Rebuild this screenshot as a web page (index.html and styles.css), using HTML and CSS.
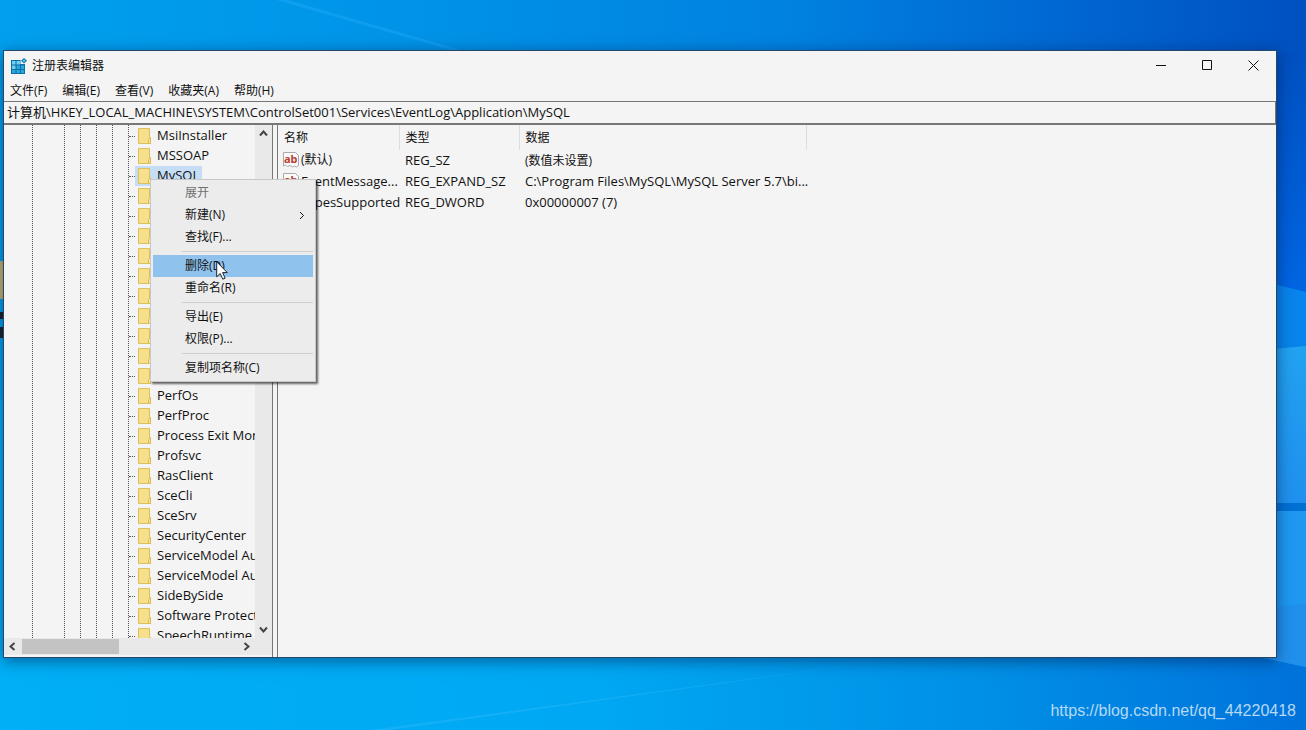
FILE: index.html
```html
<!DOCTYPE html>
<html lang="zh-CN">
<head>
<meta charset="utf-8">
<title>注册表编辑器</title>
<link rel="stylesheet" href="styles.css">
</head>
<body>
<div class="desktop">
  <svg class="wallpaper" viewBox="0 0 1306 730" preserveAspectRatio="none" aria-hidden="true">
    <defs>
      <linearGradient id="top" x1="0" y1="0" x2="1" y2="0">
        <stop offset="0" stop-color="#00a0ee"/><stop offset=".3" stop-color="#0094e8"/>
        <stop offset=".6" stop-color="#0082e0"/><stop offset=".8" stop-color="#0069d3"/><stop offset="1" stop-color="#0050c0"/>
      </linearGradient>
      <linearGradient id="bottom" x1="0" y1="0" x2="1" y2="0">
        <stop offset="0" stop-color="#00aff6"/><stop offset=".45" stop-color="#00a8f3"/>
        <stop offset=".75" stop-color="#0090e6"/><stop offset="1" stop-color="#0072db"/>
      </linearGradient>
      <linearGradient id="side" x1="0" y1="0" x2="0" y2="1">
        <stop offset="0" stop-color="#0050c0"/><stop offset="1" stop-color="#0066e4"/>
      </linearGradient>
      <linearGradient id="pane" x1="0" y1="0" x2="0" y2="1">
        <stop offset="0" stop-color="#22a2f1"/><stop offset="1" stop-color="#1f90ee"/>
      </linearGradient>
    </defs>
    <rect width="1306" height="400" fill="url(#top)"/>
    <rect y="400" width="1306" height="330" fill="url(#bottom)"/>
    <path d="M276 0h12l180 52h-10z" fill="#30b4ff" opacity=".3"/>
    <path d="M370 730l490-66-470 66z" fill="#40c0ff" opacity=".3"/>
    <rect x="1240" y="52" width="66" height="250" fill="url(#side)"/>
    <path d="M1240 276l66 16v60h-66z" fill="#0884ec"/>
    <path d="M1240 352l66-6v158h-66z" fill="url(#pane)"/>
    <rect x="1240" y="503" width="66" height="8" fill="#0070d4"/>
    <path d="M1240 511h66v156l-66-14z" fill="#1f98f2"/>
    <path d="M1240 612l66-9v64l-66-14z" fill="#2090ec"/>
  </svg>
  <div class="desktop-icon" aria-hidden="true"></div>

  <main class="window">
    <header class="titlebar">
      <svg class="app-icon" viewBox="0 0 16 16" width="16" height="16">
        <path d="M0 2h14v14H0z" fill="#0b6ea5"/>
        <path d="M1 3h3.500v3.500H1zM5.500 3H9v3.500H5.500zM1 7.500h3.500V11H1z" fill="#6fd0f2"/>
        <path d="M5.500 7.500H9V11H5.500zM10 7.500h3V11h-3zM1 12h3.500v3H1zM5.500 12H9v3H5.500zM10 12h3v3h-3z" fill="#28a9dd"/>
        <path d="M9.500 0H16v6H9.500z" fill="#f4f4f4"/>
        <path d="M13 0l3 2.800-3 2.800-3-2.800z" fill="#0f79ad"/><path d="M13 1.600l1.300 1.200-1.300 1.200-1.300-1.200z" fill="#7bd5f4"/>
      </svg>
      <h1 class="title">注册表编辑器</h1>
      <div class="window-controls">
        <button aria-label="最小化"><svg viewBox="0 0 11 11" width="11" height="11"><path d="M0 5.500h10"/></svg></button>
        <button aria-label="最大化"><svg viewBox="0 0 11 11" width="11" height="11"><path d="M.5.500h9v9h-9z"/></svg></button>
        <button aria-label="关闭"><svg viewBox="0 0 11 11" width="11" height="11"><path d="M.5.500l10 10M10.500.500l-10 10"/></svg></button>
      </div>
    </header>
    <nav class="menubar">
      <button>文件(F)</button><button>编辑(E)</button><button>查看(V)</button><button>收藏夹(A)</button><button>帮助(H)</button>
    </nav>
    <input class="address" aria-label="路径" value="计算机\HKEY_LOCAL_MACHINE\SYSTEM\ControlSet001\Services\EventLog\Application\MySQL">

    <div class="panes">
      <section class="tree-pane">
        <div class="tree-body">
          <div class="guides"><i></i><i></i><i></i><i></i><i></i><i></i></div>
          <ul class="tree" id="tree"></ul>
          <div class="vscroll">
            <button aria-label="向上"><svg viewBox="0 0 9 7" width="9" height="7"><path d="M1 5.500l3.500-4 3.500 4"/></svg></button>
            <button aria-label="向下"><svg viewBox="0 0 9 7" width="9" height="7"><path d="M1 1.500l3.500 4 3.500-4"/></svg></button>
          </div>
        </div>
        <div class="hscroll">
          <button aria-label="向左"><svg viewBox="0 0 7 9" width="7" height="9"><path d="M5.500 1l-4 3.500 4 3.500"/></svg></button>
          <div class="track"><div class="thumb"></div></div>
          <button aria-label="向右"><svg viewBox="0 0 7 9" width="7" height="9"><path d="M1.500 1l4 3.500-4 3.500"/></svg></button>
        </div>
      </section>
      <section class="value-pane">
        <table class="values">
          <thead><tr><th class="col-name">名称</th><th class="col-type">类型</th><th class="col-data">数据</th></tr></thead>
          <tbody>
            <tr><td><span class="value-name"><svg class="ab" viewBox="0 0 16 16" width="16" height="16"><path d="M.5.500h12l3 3v10l-2 1.500-2-1-2 1-2.500-1.500-2.500 1-2-1.500-2 1z" fill="#fafafa" stroke="#aaa"/><text x="1" y="11">ab</text></svg><span class="cjk">(默认)</span></span></td><td>REG_SZ</td><td class="cjk">(数值未设置)</td></tr>
            <tr><td><span class="value-name"><svg class="ab" viewBox="0 0 16 16" width="16" height="16"><path d="M.5.500h12l3 3v10l-2 1.500-2-1-2 1-2.500-1.500-2.500 1-2-1.500-2 1z" fill="#fafafa" stroke="#aaa"/><text x="1" y="11">ab</text></svg><span>EventMessage...</span></span></td><td>REG_EXPAND_SZ</td><td>C:\Program Files\MySQL\MySQL Server 5.7\bi...</td></tr>
            <tr><td><span class="value-name"><span class="ab"></span><span>TypesSupported</span></span></td><td>REG_DWORD</td><td>0x00000007 (7)</td></tr>
          </tbody>
        </table>
      </section>
    </div>
  </main>

  <div class="context-menu" role="menu">
    <button role="menuitem" disabled>展开</button>
    <button role="menuitem">新建(N)<svg viewBox="0 0 6 9" width="6" height="9"><path d="M1 1l3.500 3.500-3.500 3.500"/></svg></button>
    <button role="menuitem">查找(F)...</button>
    <hr>
    <button role="menuitem" class="active">删除(D)</button>
    <button role="menuitem">重命名(R)</button>
    <hr>
    <button role="menuitem">导出(E)</button>
    <button role="menuitem">权限(P)...</button>
    <hr>
    <button role="menuitem">复制项名称(C)</button>
  </div>
  <svg class="cursor" viewBox="0 0 12 19" width="12" height="19" aria-hidden="true"><path d="M.7.800v15l3.500-3.300 2.600 5.700 2.300-1-2.500-5.600h4.700z" fill="#fff" stroke="#222"/></svg>
  <p class="watermark">https://blog.csdn.net/qq_44220418</p>
</div>
<script src="tree.js"></script>
</body>
</html>
```
FILE: styles.css
```css
* { box-sizing: border-box; }
body {
  margin: 0;
  font: 12px/20px "Noto Sans", "Noto Sans CJK SC", sans-serif;
  color: #111;
}
button { font: inherit; color: inherit; border: 0; padding: 0; background: none; }
svg { display: block; }
button svg { fill: none; stroke: #111; }
.desktop {
  position: relative;
  display: flex;
  min-height: 100vh;
  padding: 50px 29px 72px 3px;
  overflow: hidden;
  background: #00a0ee;
}
.wallpaper { position: absolute; inset: 0; width: 100%; height: 100%; }
.desktop-icon {
  position: absolute; left: 0; top: 261px; width: 3px; height: 80px;
  background: linear-gradient(#c7b36a 0 38px, transparent 38px 51px, #222 51px 58px, transparent 58px 66px, #222 66px 77px, transparent 77px);
}
.window {
  position: relative;
  flex: 1;
  min-width: 0;
  display: flex;
  flex-direction: column;
  border: 1px solid #24486b;
  background: #f4f4f4;
  box-shadow: 0 3px 14px rgba(0, 20, 60, .5);
}
.titlebar { display: flex; align-items: center; height: 29px; padding-left: 7px; }
.title { margin: 0 auto 0 5px; font-size: 12px; font-weight: 400; }
.window-controls { display: flex; }
.window-controls button { display: grid; place-items: center; width: 46px; height: 28px; }
.menubar { display: flex; align-items: center; gap: 15px; height: 21px; padding-left: 6px; font-family: "Open Sans", "Noto Sans CJK SC", sans-serif; }
.address {
  height: 24px; padding: 0 3px 2px; border: 1px solid #777; border-bottom-width: 2px; border-left: 0;
  background: #f4f4f4; color: inherit; font: 13px/18px "Open Sans", "Noto Sans CJK SC", sans-serif;
}
.panes { flex: 1; display: flex; gap: 4px; min-height: 0; }
.tree-pane { display: flex; flex-direction: column; width: 269px; padding-bottom: 2px; border-right: 1px solid #777; }
.tree-body { position: relative; flex: 1; display: flex; min-height: 0; overflow: hidden; }
.guides i { position: absolute; top: 0; bottom: 0; border-left: 1px dotted #555; }
.guides i:nth-child(1) { left: 28px; }
.guides i:nth-child(2) { left: 60px; }
.guides i:nth-child(3) { left: 76px; }
.guides i:nth-child(4) { left: 92px; }
.guides i:nth-child(5) { left: 108px; }
.guides i:nth-child(6) { left: 124px; }
.tree { flex: 1; min-width: 0; height: 0; margin: 0; padding: 1px 0 0 125px; list-style: none; font: 13px/18px "Open Sans", sans-serif; }
.tree li { display: flex; align-items: center; height: 20px; overflow: hidden; white-space: nowrap; }
.tree li::before { content: ""; flex: none; width: 6px; border-top: 1px dotted #555; }
.node { display: flex; align-items: center; gap: 2px; height: 20px; padding-left: 3px; }
.node span { padding: 0 3px; height: 20px; }
.selected .node { background: #c5def5; }
.vscroll { display: flex; flex-direction: column; justify-content: space-between; width: 17px; background: #e9e9e9; }
.vscroll button, .hscroll button { display: grid; place-items: center; width: 17px; height: 17px; }
.vscroll svg, .hscroll svg { stroke: #444; stroke-width: 2; }
.hscroll { display: flex; height: 17px; padding-right: 17px; background: #e9e9e9; }
.track { flex: 1; }
.thumb { width: 97px; height: 15px; margin: 1px; background: #c3c3c3; }
.value-pane { flex: 1; min-width: 0; border-left: 1px solid #777; }
.values { border-collapse: collapse; table-layout: fixed; width: 529px; }
.values th { height: 25px; padding: 0 0 0 6px; border-right: 1px solid #ddd; text-align: left; font-size: 12px; font-weight: 400; }
.values td { height: 21px; padding: 0 0 2px 6px; white-space: nowrap; font: 13px/18px "Open Sans", "Noto Sans CJK SC", sans-serif; }
.values td.cjk { padding-bottom: 0; }
.values .cjk { font-size: 12px; }
.values td:first-child { padding-left: 5px; }
.col-name { width: 121px; }
.col-type { width: 120px; }
.value-name { display: flex; align-items: center; gap: 2px; }
.ab { flex: none; width: 16px; }
.ab text { font: 700 11px "Noto Sans", sans-serif; fill: #b8432f; }
.context-menu {
  position: absolute; left: 150px; top: 179px; width: 166px; padding: 2px;
  border: 1px solid #c8c8c8; background: #ececec; box-shadow: 2px 2px 2px rgba(0, 0, 0, .6);
  font-family: "Open Sans", "Noto Sans CJK SC", sans-serif;
}
.context-menu button { display: flex; align-items: center; justify-content: space-between; width: 100%; height: 22px; padding: 0 8px 0 32px; }
.context-menu button:disabled { color: #707070; }
.context-menu .active { background: #90c2ee; }
.context-menu hr { height: 1px; margin: 3px 0 3px 29px; border: 0; background: #cfcfcf; }
.cursor { position: absolute; left: 216px; top: 261px; }
.watermark { position: absolute; right: 10px; bottom: 9px; margin: 0; font: 16px/20px "Liberation Sans", sans-serif; color: #b5d9f5; }
```
FILE: tree.js
```js
const names = ["MsiInstaller", "MSSOAP", "MySQL", "", "", "", "", "", "", "", "", "", "",
  "PerfOs", "PerfProc", "Process Exit Monitor", "Profsvc", "RasClient", "SceCli", "SceSrv",
  "SecurityCenter", "ServiceModel Audit", "ServiceModel Audit", "SideBySide", "Software Protection", "SpeechRuntime"];
const folder = '<svg viewBox="0 0 14 16" width="14" height="16"><path d="M.5.500h11v9l1 1v5H.5z" fill="#f6df8d" stroke="#dfbf58"/><path d="M10.500 15.500v-4l2-2v6z" fill="#f9e8a6" stroke="#dcb94e"/></svg>';
document.getElementById("tree").innerHTML = names
  .map(n => `<li class="${n === "MySQL" ? "selected" : ""}"><div class="node">${folder}<span>${n}</span></div></li>`)
  .join("");
```
